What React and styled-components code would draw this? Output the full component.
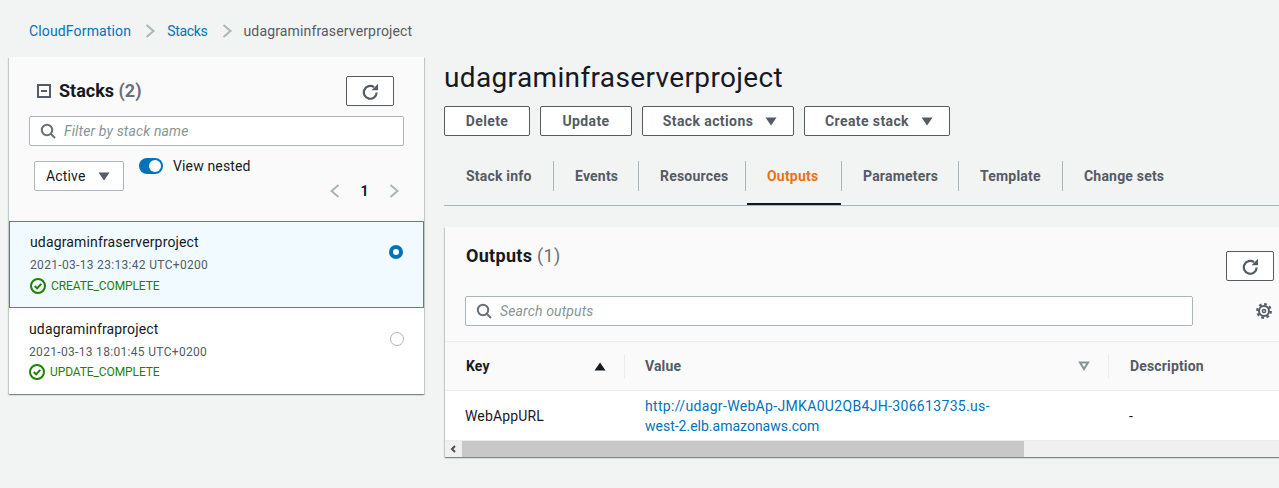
import React from "react"
import styled, { createGlobalStyle } from "styled-components"

const GlobalStyle = createGlobalStyle`
  html, body {
    margin: 0;
    padding: 0;
    background: #f2f3f3;
  }
  body {
    font-family: "Roboto", "Liberation Sans", sans-serif;
    font-size: 14px;
    letter-spacing: 0.15px;
    color: #16191f;
  }
  * {
    box-sizing: border-box;
  }
`

const Page = styled.div`
  width: 1279px;
  height: 488px;
  overflow: hidden;
  padding: 0 0 0 9px;
`

const Breadcrumbs = styled.nav`
  display: flex;
  align-items: center;
  height: 57px;
  padding: 5px 0 0 20px;
  font-size: 14px;
`

const Crumb = styled.a`
  letter-spacing: ${(p) => (p.$short ? -0.3 : 0.15)}px;
  color: ${(p) => (p.$current ? "#545b64" : "#0073bb")};
`

const CrumbSep = styled.svg`
  width: 12px;
  height: 16px;
  margin: 0 11px 0 13px;
  fill: none;
  stroke: #aab7b8;
  stroke-width: 2;
`

const Columns = styled.div`
  display: grid;
  grid-template-columns: 415px 835px;
  column-gap: 20px;
  align-items: start;
`

const Panel = styled.aside`
  background: #fff;
  box-shadow: 0 1px 1px 0 rgba(0, 28, 36, 0.3), 1px 1px 1px 0 rgba(0, 28, 36, 0.15),
    -1px 1px 1px 0 rgba(0, 28, 36, 0.15);
`

const PanelTop = styled.div`
  height: 164px;
  padding: 19px 20px 0;
  background: #fafafa;
`

const PanelHead = styled.div`
  display: flex;
  align-items: center;
  justify-content: space-between;
  height: 30px;
  padding-left: 8px;
`

const HeadTitle = styled.div`
  display: flex;
  align-items: center;
  gap: 8px;
`

const Heading = styled.h2`
  margin: 0 0 0 ${(p) => p.$ml || 0}px;
  font-size: 18px;
  line-height: 26px;
  font-weight: 700;
  letter-spacing: ${(p) => p.$ls}px;
  color: #16191f;
`

const Count = styled.span`
  font-weight: ${(p) => (p.$light ? 400 : 700)};
  color: #687078;
`

const IconButton = styled.button`
  display: flex;
  align-items: center;
  justify-content: center;
  width: 48px;
  height: 30px;
  margin: ${(p) => p.$mt || 0}px ${(p) => p.$mr || 0}px 0 0;
  padding: 0;
  background: #fff;
  border: 1px solid #545b64;
  border-radius: 2px;
`

const SearchBox = styled.div`
  display: flex;
  align-items: center;
  gap: 8px;
  width: ${(p) => p.$w}px;
  height: 30px;
  margin-top: ${(p) => p.$mt || 0}px;
  padding-left: 10px;
  background: #fff;
  border: 1px solid #aab7b8;
  border-radius: 2px;
  font-size: 14px;
  font-style: italic;
  color: #879596;
`

const FilterRow = styled.div`
  display: flex;
  align-items: flex-start;
  margin-top: 10px;
  padding-left: 5px;
`

const SelectBox = styled.div`
  display: flex;
  align-items: center;
  justify-content: space-between;
  width: 90px;
  height: 30px;
  margin-top: 5px;
  padding: 0 13px 0 11px;
  background: #fff;
  border: 1px solid #aab7b8;
  border-radius: 2px;
  font-size: 14px;
`

const Toggle = styled.span`
  position: relative;
  display: block;
  width: 24px;
  height: 16px;
  margin: 2px 10px 0 15px;
  border-radius: 8px;
  background: #0073bb;

  &::after {
    content: "";
    position: absolute;
    top: 2px;
    right: 2px;
    width: 12px;
    height: 12px;
    border-radius: 50%;
    background: #fff;
  }
`

const ToggleLabel = styled.span`
  font-size: 14px;
  line-height: 20px;
`

const Pager = styled.div`
  display: flex;
  align-items: center;
  justify-content: flex-end;
  margin-top: -10px;
  padding-right: 4px;
  height: 20px;
`

const PageNum = styled.span`
  width: 47px;
  text-align: center;
  font-size: 14px;
  font-weight: 700;
`

const PagerIcon = styled.svg`
  width: 12px;
  height: 16px;
  fill: none;
  stroke: #aab7b8;
  stroke-width: 2;
`

const StackRow = styled.div`
  display: flex;
  align-items: flex-start;
  justify-content: space-between;
  height: ${(p) => (p.$selected ? 87 : 86)}px;
  padding: ${(p) => (p.$selected ? "10px 20px 0 20px" : "11px 20px 0 20px")};
  background: ${(p) => (p.$selected ? "#f1faff" : "#fff")};
  border: ${(p) => (p.$selected ? "1px solid #00a1c9" : "none")};
`

const StackName = styled.div`
  font-size: 14px;
  line-height: 20px;
  color: #16191f;
`

const StackDate = styled.div`
  margin-top: 5px;
  font-size: 12px;
  line-height: 16px;
  letter-spacing: 0.32px;
  color: #545b64;
`

const Status = styled.div`
  display: flex;
  align-items: center;
  gap: 5px;
  margin-top: ${(p) => (p.$selected ? 5 : 4)}px;
  font-size: 12px;
  line-height: 16px;
  letter-spacing: -0.1px;
  color: #1d8102;
`

const Radio = styled.span`
  display: block;
  width: 14px;
  height: 14px;
  margin-top: 13px;
  border-radius: 50%;
  background: #fff;
  border: ${(p) => (p.$on ? "4px solid #0073bb" : "1px solid #aab7b8")};
`

const Main = styled.main`
  margin-top: 3px;
  min-width: 0;
`

const PageTitle = styled.h1`
  margin: 0;
  height: 30px;
  font-size: 28px;
  line-height: 36px;
  font-weight: 400;
  letter-spacing: 0.36px;
  color: #16191f;
`

const Actions = styled.div`
  display: flex;
  gap: 10px;
  margin-top: 16px;
`

const Button = styled.button`
  display: flex;
  align-items: center;
  justify-content: center;
  gap: 12px;
  width: ${(p) => p.$w}px;
  height: 30px;
  padding: 0 0 0 ${(p) => (p.$menu ? 4 : 0)}px;
  background: #fff;
  border: 1px solid #545b64;
  border-radius: 2px;
  font-family: inherit;
  font-size: 14px;
  font-weight: 700;
  letter-spacing: 0.4px;
  color: #545b64;
`

const Tabs = styled.div`
  display: flex;
  height: 70px;
  padding-top: 25px;
  border-bottom: 1px solid #aab7b8;
`

const Tab = styled.div`
  position: relative;
  display: flex;
  align-items: center;
  width: ${(p) => p.$w}px;
  height: 30px;
  padding-left: ${(p) => (p.$first ? 22 : 21)}px;
  font-size: 14px;
  font-weight: 700;
  letter-spacing: 0.2px;
  color: ${(p) => (p.$active ? "#ec7211" : "#545b64")};
  border-right: ${(p) => (p.$last ? "none" : "1px solid #aab7b8")};

  ${(p) =>
    p.$active &&
    `&::after {
      content: "";
      position: absolute;
      left: 1px;
      right: 0;
      bottom: -14px;
      height: 2px;
      background: #16191f;
    }`}
`

const Card = styled.section`
  width: 860px;
  margin: 21px 0 0 1px;
  background: #fff;
  box-shadow: 0 1px 1px 0 rgba(0, 28, 36, 0.3), 1px 1px 1px 0 rgba(0, 28, 36, 0.15),
    -1px 1px 1px 0 rgba(0, 28, 36, 0.15);
`

const CardHead = styled.div`
  height: 115px;
  padding: 16px 0 0 20px;
  background: #fafafa;
  border-bottom: 1px solid #eaeded;
`

const CardTitleRow = styled.div`
  display: flex;
  justify-content: space-between;
  height: 38px;
  margin-bottom: 15px;
  padding-right: 31px;
`

const CardSearchRow = styled.div`
  display: flex;
  align-items: center;
`

const GearIcon = styled.svg`
  width: 16px;
  height: 16px;
  margin-left: 63px;
  fill: none;
  stroke: #545b64;
`

const TableHead = styled.div`
  display: grid;
  grid-template-columns: 180px 484px 1fr;
  height: 49px;
  align-items: center;
  background: #fafafa;
  border-bottom: 1px solid #eaeded;
`

const HeadCell = styled.div`
  display: flex;
  align-items: center;
  justify-content: space-between;
  height: 24px;
  padding: 0 18px 0 ${(p) => (p.$last ? 21 : 20)}px;
  font-size: 14px;
  font-weight: 700;
  color: ${(p) => (p.$sorted ? "#16191f" : "#545b64")};
  border-right: ${(p) => (p.$last ? "none" : "1px solid #eaeded")};
  margin-left: ${(p) => (p.$sorted ? 1 : 0)}px;
`

const TableRow = styled.div`
  display: grid;
  grid-template-columns: 180px 484px 1fr;
  align-items: center;
  height: 50px;
  border-bottom: 1px solid #eaeded;
`

const Cell = styled.div`
  padding: 0 20px;
  font-size: 14px;
  line-height: 20px;
  color: #16191f;
`

const ValueLine = styled.a`
  display: block;
  white-space: nowrap;
  letter-spacing: ${(p) => (p.$wide ? 0.33 : 0)}px;
  color: #0073bb;
`

const ScrollBar = styled.div`
  display: flex;
  height: 16px;
  background: #f0f0f0;
`

const ScrollArrow = styled.div`
  display: flex;
  align-items: center;
  justify-content: center;
  width: 17px;
`

const ScrollThumb = styled.div`
  width: 562px;
  background: #c8c8c8;
`

const Chevron = ({ dir = "right", as: Comp = CrumbSep }) => (
  <Comp viewBox="0 0 12 16">
    <path d={dir === "right" ? "M2.5 2l7 6-7 6" : "M9.5 2l-7 6 7 6"} />
  </Comp>
)

const Caret = ({ color = "#545b64", up = false }) => (
  <svg width="12" height="9" viewBox="0 0 12 9">
    <path d={up ? "M0.5 8.5h11L6 0.5z" : "M0.5 0.5h11L6 8.5z"} fill={color} />
  </svg>
)

const RefreshIcon = () => (
  <svg width="17" height="17" viewBox="0 0 17 17" fill="none" stroke="#545b64" strokeWidth="2.2">
    <path d="M14.6 9.4a6.4 6.4 0 1 1-2.6-5.2" />
    <path d="M16 0.8v6.4H9.6z" fill="#545b64" stroke="none" />
  </svg>
)

const SearchIcon = () => (
  <svg width="16" height="16" viewBox="0 0 16 16" fill="none" stroke="#687078" strokeWidth="2">
    <circle cx="7" cy="7" r="5.2" />
    <path d="M11 11l4 4" />
  </svg>
)

const CollapseIcon = () => (
  <svg width="14" height="14" viewBox="0 0 14 14" fill="none" stroke="#545b64" strokeWidth="2">
    <rect x="1" y="1" width="12" height="12" />
    <path d="M4 7h6" />
  </svg>
)

const CheckIcon = () => (
  <svg width="16" height="16" viewBox="0 0 16 16" fill="none" stroke="#1d8102" strokeWidth="2">
    <circle cx="8" cy="8" r="7" />
    <path d="M4.8 8l2.3 2.4 4.2-4.6" />
  </svg>
)

const DownOutline = () => (
  <svg width="12" height="10" viewBox="0 0 12 10" fill="none" stroke="#879596" strokeWidth="2">
    <path d="M2 1.5h8L6 8z" />
  </svg>
)

const stacks = [
  {
    name: "udagraminfraserverproject",
    date: "2021-03-13 23:13:42 UTC+0200",
    status: "CREATE_COMPLETE",
    selected: true,
  },
  {
    name: "udagraminfraproject",
    date: "2021-03-13 18:01:45 UTC+0200",
    status: "UPDATE_COMPLETE",
  },
]

const tabs = [
  { label: "Stack info", width: 110 },
  { label: "Events", width: 85 },
  { label: "Resources", width: 107 },
  { label: "Outputs", width: 96 },
  { label: "Parameters", width: 117 },
  { label: "Template", width: 104 },
  { label: "Change sets", width: 120 },
]

const App = () => {
  return (
    <Page>
      <GlobalStyle />
      <Breadcrumbs>
        <Crumb>CloudFormation</Crumb>
        <Chevron />
        <Crumb $short>Stacks</Crumb>
        <Chevron />
        <Crumb $current>udagraminfraserverproject</Crumb>
      </Breadcrumbs>

      <Columns>
        <Panel>
          <PanelTop>
            <PanelHead>
              <HeadTitle>
                <CollapseIcon />
                <Heading $ls={0}>
                  Stacks <Count>(2)</Count>
                </Heading>
              </HeadTitle>
              <IconButton $mr={10}>
                <RefreshIcon />
              </IconButton>
            </PanelHead>
            <SearchBox $w={375} $mt={10}>
              <SearchIcon />
              Filter by stack name
            </SearchBox>
            <FilterRow>
              <SelectBox>
                Active
                <Caret />
              </SelectBox>
              <Toggle />
              <ToggleLabel>View nested</ToggleLabel>
            </FilterRow>
            <Pager>
              <Chevron dir="left" as={PagerIcon} />
              <PageNum>1</PageNum>
              <Chevron as={PagerIcon} />
            </Pager>
          </PanelTop>

          {stacks.map((stack) => (
            <StackRow key={stack.name} $selected={stack.selected}>
              <div>
                <StackName>{stack.name}</StackName>
                <StackDate>{stack.date}</StackDate>
                <Status $selected={stack.selected}>
                  <CheckIcon />
                  {stack.status}
                </Status>
              </div>
              <Radio $on={stack.selected} />
            </StackRow>
          ))}
        </Panel>

        <Main>
          <PageTitle>udagraminfraserverproject</PageTitle>
          <Actions>
            <Button $w={86}>Delete</Button>
            <Button $w={92}>Update</Button>
            <Button $w={152} $menu>
              Stack actions
              <Caret />
            </Button>
            <Button $w={146} $menu>
              Create stack
              <Caret />
            </Button>
          </Actions>

          <Tabs>
            {tabs.map((tab, index) => (
              <Tab
                key={tab.label}
                $w={tab.width}
                $first={index === 0}
                $last={index === tabs.length - 1}
                $active={tab.label === "Outputs"}
              >
                {tab.label}
              </Tab>
            ))}
          </Tabs>

          <Card>
            <CardHead>
              <CardTitleRow>
                <Heading $ml={1} $ls={0.3}>
                  Outputs <Count $light>(1)</Count>
                </Heading>
                <IconButton $mt={8}>
                  <RefreshIcon />
                </IconButton>
              </CardTitleRow>
              <CardSearchRow>
                <SearchBox $w={728}>
                  <SearchIcon />
                  Search outputs
                </SearchBox>
                <GearIcon viewBox="0 0 16 16">
                  <circle cx="8" cy="8" r="5" strokeWidth="2" />
                  <circle cx="8" cy="8" r="6.8" strokeWidth="2.2" strokeDasharray="2.7 2.64" />
                  <circle cx="8" cy="8" r="1.6" strokeWidth="1.5" />
                </GearIcon>
              </CardSearchRow>
            </CardHead>

            <TableHead>
              <HeadCell $sorted>
                Key
                <Caret color="#16191f" up />
              </HeadCell>
              <HeadCell>
                Value
                <DownOutline />
              </HeadCell>
              <HeadCell $last>Description</HeadCell>
            </TableHead>

            <TableRow>
              <Cell>WebAppURL</Cell>
              <Cell>
                <ValueLine $wide>http://udagr-WebAp-JMKA0U2QB4JH-306613735.us-</ValueLine>
                <ValueLine>west-2.elb.amazonaws.com</ValueLine>
              </Cell>
              <Cell>-</Cell>
            </TableRow>

            <ScrollBar>
              <ScrollArrow>
                <svg width="7" height="8" viewBox="0 0 7 8" fill="none" stroke="#505050" strokeWidth="2">
                  <path d="M5 1L2 4l3 3" />
                </svg>
              </ScrollArrow>
              <ScrollThumb />
            </ScrollBar>
          </Card>
        </Main>
      </Columns>
    </Page>
  )
}

export default App
